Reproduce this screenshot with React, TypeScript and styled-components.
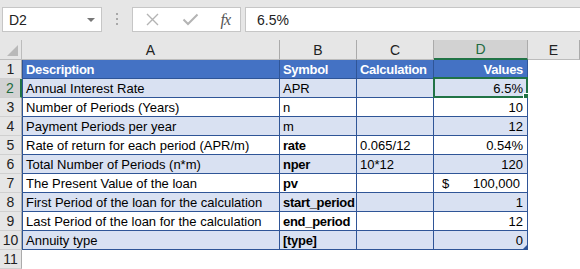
import React from 'react'
import styled, { createGlobalStyle } from 'styled-components'

const Global = createGlobalStyle`
  html, body {
    margin: 0;
    padding: 0;
    background: #ffffff;
  }
  body {
    width: 580px;
    height: 269px;
    overflow: hidden;
    font-family: 'Liberation Sans', Arial, sans-serif;
  }
`

const Window = styled.div`
  display: flex;
  flex-direction: column;
  width: 580px;
  height: 269px;
  overflow: hidden;
`

const Toolbar = styled.div`
  display: flex;
  align-items: flex-start;
  height: 42px;
  padding: 7px 0 0 2px;
  box-sizing: border-box;
  background: #e6e6e6;
`

const NameBox = styled.div`
  display: flex;
  align-items: center;
  justify-content: space-between;
  width: 100px;
  height: 25px;
  box-sizing: border-box;
  padding: 0 6px 0 6px;
  background: #ffffff;
  border: 1px solid #c6c6c6;
  font-size: 14px;
  color: #222;
`

const Caret = styled.span`
  width: 0;
  height: 0;
  border-left: 4px solid transparent;
  border-right: 4px solid transparent;
  border-top: 4px solid #777;
`

const Dots = styled.div`
  display: flex;
  flex-direction: column;
  gap: 3px;
  margin: 6px 14px 0 14px;
  & > span {
    width: 2px;
    height: 2px;
    background: #a8a8a8;
  }
`

const FxButtons = styled.div`
  display: flex;
  align-items: center;
  justify-content: space-between;
  width: 109px;
  height: 25px;
  box-sizing: border-box;
  padding: 0 10px 0 12px;
  background: #ffffff;
  border: 1px solid #c6c6c6;
`

const FxLabel = styled.span`
  font-family: 'Liberation Serif', 'Times New Roman', serif;
  font-style: italic;
  font-size: 16px;
  color: #555;
  letter-spacing: -1px;
`

const FormulaInput = styled.div`
  flex: 1;
  display: flex;
  align-items: center;
  height: 25px;
  margin-left: 4px;
  padding-left: 11px;
  box-sizing: border-box;
  background: #ffffff;
  border: 1px solid #c6c6c6;
  border-right: none;
  font-size: 14px;
  color: #222;
`

const Sheet = styled.div`
  display: grid;
  grid-template-columns: 22px 258px 77px 77px 94px 1fr;
  grid-template-rows: 20px repeat(11, 19px);
  background: #ffffff;
  font-size: 13px;
`

const Corner = styled.div`
  position: relative;
  background: #e6e6e6;
  border-right: 1px solid #bcbcbc;
  border-bottom: 1px solid #bcbcbc;
  &::after {
    content: '';
    position: absolute;
    right: 3px;
    bottom: 3px;
    width: 0;
    height: 0;
    border-left: 11px solid transparent;
    border-bottom: 11px solid #b9b9b9;
  }
`

const ColHead = styled.div<{ $active?: boolean }>`
  display: flex;
  align-items: center;
  justify-content: center;
  box-sizing: border-box;
  background: ${(p) => (p.$active ? '#d2d2d2' : '#e6e6e6')};
  border-right: 1px solid #ababab;
  border-bottom: ${(p) => (p.$active ? '2px solid #217346' : '1px solid #bcbcbc')};
  color: ${(p) => (p.$active ? '#1e6b40' : '#222')};
  font-size: 14px;
`

const RowHead = styled.div<{ $active?: boolean }>`
  display: flex;
  align-items: center;
  justify-content: center;
  box-sizing: border-box;
  background: ${(p) => (p.$active ? '#d2d2d2' : '#e6e6e6')};
  border-bottom: 1px solid #d0d0d0;
  border-right: ${(p) => (p.$active ? '2px solid #217346' : '1px solid #ababab')};
  color: ${(p) => (p.$active ? '#1e6b40' : '#222')};
  font-size: 14px;
`

const Cell = styled.div<{ $kind?: 'head' | 'band' | 'plain' | 'empty'; $right?: boolean; $bold?: boolean; $first?: boolean }>`
  position: relative;
  display: flex;
  align-items: center;
  justify-content: ${(p) => (p.$right ? 'flex-end' : 'flex-start')};
  box-sizing: border-box;
  padding: 0 4px 0 3px;
  white-space: nowrap;
  overflow: visible;
  color: ${(p) => (p.$kind === 'head' ? '#ffffff' : '#000')};
  font-weight: ${(p) => (p.$bold || p.$kind === 'head' ? 700 : 400)};
  letter-spacing: ${(p) => (p.$bold || p.$kind === 'head' ? '-0.3px' : '0')};
  background: ${(p) => (p.$kind === 'head' ? '#4472c4' : p.$kind === 'band' ? '#d9e1f2' : '#ffffff')};
  ${(p) =>
    p.$kind === 'empty'
      ? ''
      : `
    border-right: 1px solid #2f5597;
    border-bottom: 1px solid #2f5597;
  `}
  ${(p) => (p.$first ? 'border-left: 1px solid #2f5597;' : '')}
`

const Selection = styled.div`
  position: absolute;
  left: -1px;
  top: -2px;
  right: -1px;
  bottom: -1px;
  border: 2px solid #217346;
  pointer-events: none;
  &::after {
    content: '';
    position: absolute;
    right: -4px;
    bottom: -4px;
    width: 5px;
    height: 5px;
    background: #217346;
    border: 1px solid #fff;
  }
`

const ResizeMark = styled.div`
  position: absolute;
  right: 0;
  bottom: 0;
  width: 0;
  height: 0;
  border-left: 4px solid transparent;
  border-bottom: 4px solid #2f5597;
`

const Money = styled.div`
  display: flex;
  justify-content: space-between;
  width: 100%;
  padding: 0 3px 0 5px;
`

type Row = { a: string; b: string; c: string; d: string; bold?: boolean }

const rows: Row[] = [
  { a: 'Annual Interest Rate', b: 'APR', c: '', d: '6.5%' },
  { a: 'Number of Periods (Years)', b: 'n', c: '', d: '10' },
  { a: 'Payment Periods per year', b: 'm', c: '', d: '12' },
  { a: 'Rate of return for each period (APR/m)', b: 'rate', c: '0.065/12', d: '0.54%', bold: true },
  { a: 'Total Number of Periods (n*m)', b: 'nper', c: '10*12', d: '120', bold: true },
  { a: 'The Present Value of the loan', b: 'pv', c: '', d: 'money', bold: true },
  { a: 'First Period of the loan for the calculation', b: 'start_period', c: '', d: '1', bold: true },
  { a: 'Last Period of the loan for the calculation', b: 'end_period', c: '', d: '12', bold: true },
  { a: 'Annuity type', b: '[type]', c: '', d: '0', bold: true },
]

function CrossIcon() {
  return (
    <svg width="15" height="15" viewBox="0 0 15 15">
      <path d="M2 2 L13 13 M13 2 L2 13" stroke="#b4b4b4" strokeWidth="1.4" fill="none" />
    </svg>
  )
}

function CheckIcon() {
  return (
    <svg width="17" height="15" viewBox="0 0 17 15">
      <path d="M1.5 7.5 L6 12 L15.5 2.5" stroke="#b4b4b4" strokeWidth="2" fill="none" />
    </svg>
  )
}

export default function App() {
  return (
    <Window>
      <Global />
      <Toolbar>
        <NameBox>
          D2
          <Caret />
        </NameBox>
        <Dots>
          <span />
          <span />
          <span />
        </Dots>
        <FxButtons>
          <CrossIcon />
          <CheckIcon />
          <FxLabel>fx</FxLabel>
        </FxButtons>
        <FormulaInput>6.5%</FormulaInput>
      </Toolbar>
      <Sheet>
        <Corner />
        <ColHead>A</ColHead>
        <ColHead>B</ColHead>
        <ColHead>C</ColHead>
        <ColHead $active>D</ColHead>
        <ColHead>E</ColHead>

        <RowHead>1</RowHead>
        <Cell $kind="head" $first>Description</Cell>
        <Cell $kind="head">Symbol</Cell>
        <Cell $kind="head">Calculation</Cell>
        <Cell $kind="head" $right>Values</Cell>
        <Cell $kind="empty" />

        {rows.map((r, i) => {
          const kind = i % 2 === 0 ? 'band' : 'plain'
          const n = i + 2
          return (
            <React.Fragment key={n}>
              <RowHead $active={n === 2}>{n}</RowHead>
              <Cell $kind={kind} $first>{r.a}</Cell>
              <Cell $kind={kind} $bold={r.bold}>{r.b}</Cell>
              <Cell $kind={kind}>{r.c}</Cell>
              <Cell $kind={kind} $right>
                {r.d === 'money' ? (
                  <Money>
                    <span>$</span>
                    <span>100,000</span>
                  </Money>
                ) : (
                  r.d
                )}
                {n === 2 && <Selection />}
                {n === 10 && <ResizeMark />}
              </Cell>
              <Cell $kind="empty" />
            </React.Fragment>
          )
        })}

        <RowHead>11</RowHead>
        <Cell $kind="empty" />
        <Cell $kind="empty" />
        <Cell $kind="empty" />
        <Cell $kind="empty" />
        <Cell $kind="empty" />
      </Sheet>
    </Window>
  )
}
